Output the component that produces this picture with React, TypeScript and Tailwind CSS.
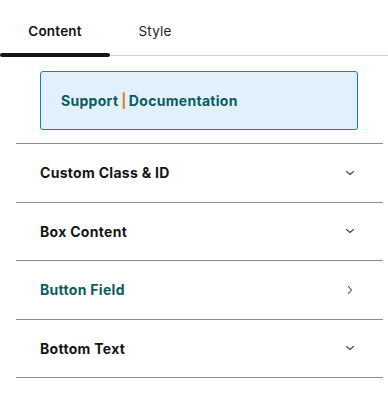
import React from 'react';

const ChevronDown = () => (
  <svg width="10" height="10" viewBox="0 0 10 10" fill="none">
    <path d="M1.5 3.5 L5 6.5 L8.5 3.5" stroke="#444" strokeWidth="1.1" strokeLinecap="round" strokeLinejoin="round" />
  </svg>
);

const ChevronRight = () => (
  <svg width="10" height="10" viewBox="0 0 10 10" fill="none">
    <path d="M3.5 1.5 L6.5 5 L3.5 8.5" stroke="#444" strokeWidth="1.1" strokeLinecap="round" strokeLinejoin="round" />
  </svg>
);

const rows = [
  { label: 'Custom Class & ID', open: false, active: false },
  { label: 'Box Content', open: false, active: false },
  { label: 'Button Field', open: true, active: true },
  { label: 'Bottom Text', open: false, active: false },
];

const App = () => {
  return (
    <div className="w-[388px] h-[416px] bg-white" style={{ fontFamily: 'Inter, "Noto Sans", sans-serif' }}>
      {/* tabs */}
      <div className="relative flex h-[56px] border-b border-[#cfcfcf]">
        <div className="w-[110px] flex items-center justify-center pt-[7px] text-[13.5px] font-semibold tracking-[0.2px] text-[#111]">Content</div>
        <div className="w-[90px] flex items-center justify-center pt-[7px] text-[13.5px] tracking-[0.2px] text-[#222]">Style</div>
        <div className="absolute left-0 bottom-[-2px] w-[110px] h-[4px] rounded-full bg-[#151515]" />
      </div>

      <div className="pl-[40px] pr-[30px] pt-[15px] pb-[13px]">
        <div className="h-[59px] rounded-[3px] border border-[#1a73e8] bg-[#e1f0fa] flex items-center pl-[20px] text-[14px] font-bold tracking-[0.3px] text-[#0c5b62]">
          <span>Support</span>
          <span className="ml-[3px] mr-[2px] font-bold text-[#d9821a]">|</span>
          <span>Documentation</span>
        </div>
      </div>

      <div className="ml-4 mr-[5px]">
        {rows.map((r) => (
          <div key={r.label} className="border-t border-[#8c8c8c]">
            <div className="h-[57.5px] flex items-center justify-between pl-[24px] pr-[28px]">
              <span className={`text-[14px] font-bold tracking-[0.3px] ${r.active ? 'text-[#0c5b62]' : 'text-[#151515]'}`}>{r.label}</span>
              {r.open ? <ChevronRight /> : <ChevronDown />}
            </div>
          </div>
        ))}
        <div className="border-t border-[#8c8c8c]" />
      </div>
    </div>
  );
};

export default App;
